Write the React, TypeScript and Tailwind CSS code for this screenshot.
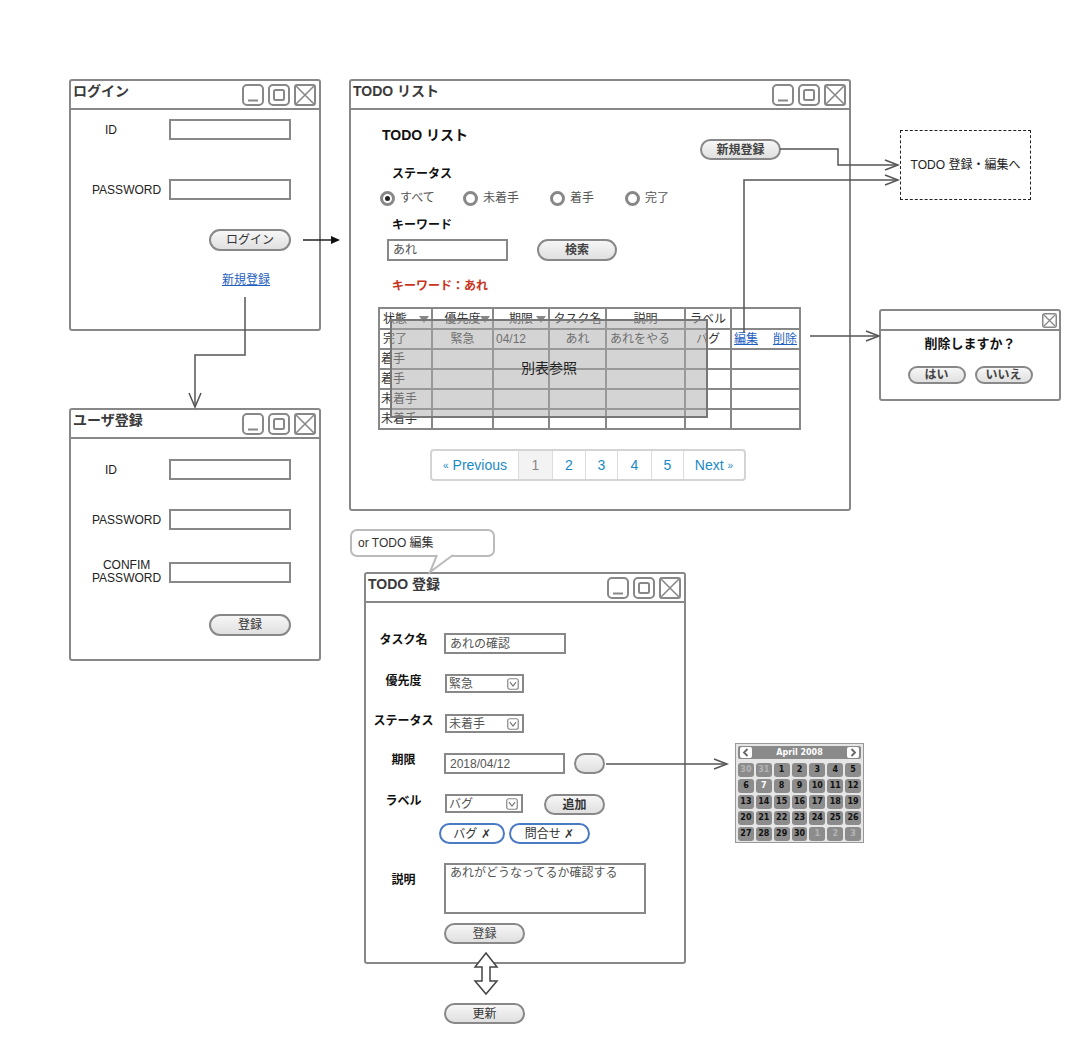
import React from 'react';

const WinControls = () => (
  <div className="flex gap-[4px] pt-[3px]">
    <svg width="22" height="22" viewBox="0 0 22 22">
      <rect x="1" y="1" width="20" height="20" rx="4" fill="white" stroke="#888" strokeWidth="2" />
      <path d="M6 16.5h10" stroke="#888" strokeWidth="2" />
    </svg>
    <svg width="22" height="22" viewBox="0 0 22 22">
      <rect x="1" y="1" width="20" height="20" rx="4" fill="white" stroke="#888" strokeWidth="2" />
      <rect x="6" y="6" width="10" height="10" rx="1.5" fill="none" stroke="#888" strokeWidth="2" />
    </svg>
    <svg width="22" height="22" viewBox="0 0 22 22">
      <rect x="1" y="1" width="20" height="20" rx="2" fill="white" stroke="#888" strokeWidth="2" />
      <path d="M2 2l18 18M20 2L2 20" stroke="#888" strokeWidth="1.6" />
    </svg>
  </div>
);

type WinProps = { title: string; className: string; children?: React.ReactNode };

function Win({ title, className, children }: WinProps) {
  return (
    <div className={`absolute flex flex-col bg-white border-2 border-[#888] rounded-[3px] ${className}`}>
      <div className="h-[29px] shrink-0 flex items-start justify-between border-b-2 border-[#888] pl-[2px] pr-[3px]">
        <span className="text-[14px] leading-[20px] font-bold text-[#3a3a3a]">{title}</span>
        <WinControls />
      </div>
      {children}
    </div>
  );
}

function Btn({ children, className = '' }: { children?: React.ReactNode; className?: string }) {
  return (
    <div
      className={`flex items-center justify-center rounded-full border-2 border-[#888] bg-linear-to-b from-[#f6f6f6] to-[#e0e0e0] text-[12px] leading-[14px] ${className}`}
    >
      {children}
    </div>
  );
}

function Field({ children, className = '' }: { children?: React.ReactNode; className?: string }) {
  return (
    <div className={`flex items-center border-2 border-[#888] bg-white pl-[4px] text-[12px] text-[#555] ${className}`}>
      {children}
    </div>
  );
}

function Select({ children, className = '' }: { children?: React.ReactNode; className?: string }) {
  return (
    <div
      className={`flex items-center justify-between border-2 border-[#888] bg-white h-[19px] pl-[2px] pr-[3px] text-[12px] text-[#555] ${className}`}
    >
      <span>{children}</span>
      <svg width="12" height="12" viewBox="0 0 12 12">
        <rect x="0.75" y="0.75" width="10.5" height="10.5" rx="2" fill="white" stroke="#888" strokeWidth="1.2" />
        <path d="M3 4.2l3 3.8 3-3.8" fill="none" stroke="#777" strokeWidth="1.2" />
      </svg>
    </div>
  );
}

function Radio({ on, label, className = '' }: { on?: boolean; label: string; className?: string }) {
  return (
    <div className={`flex items-center gap-[5px] ${className}`}>
      <span className="flex w-[15px] h-[15px] items-center justify-center rounded-full border-[3px] border-[#888] bg-white">
        {on && <span className="w-[5px] h-[5px] rounded-full bg-[#222]" />}
      </span>
      <span className="text-[12px] text-[#555]">{label}</span>
    </div>
  );
}

const Tri = () => (
  <svg width="10" height="7" viewBox="0 0 10 7" className="absolute right-[2px] top-[7px]">
    <path d="M0 0h10L5 7z" fill="#888" />
  </svg>
);

function Label({ children, className = '' }: { children: React.ReactNode; className?: string }) {
  return <div className={`w-[75px] shrink-0 text-center text-[12px] leading-[14px] font-bold text-[#111] ${className}`}>{children}</div>;
}

const calDays: { d: number; dim?: boolean; hi?: boolean }[] = [
  { d: 30, dim: true },
  { d: 31, dim: true },
  ...Array.from({ length: 30 }, (_, i) => ({ d: i + 1, hi: i + 1 === 7 })),
  { d: 1, dim: true },
  { d: 2, dim: true },
  { d: 3, dim: true },
];

const Calendar = () => (
  <div className="absolute left-[735px] top-[743px] w-[129px] h-[100px] border border-[#999] bg-[#e6e6e6] p-[2px] font-['DejaVu_Sans',sans-serif]">
    <div className="flex items-center justify-between h-[13px] rounded-[2px] bg-[#8a8a8a] px-[2px]">
      <svg width="12" height="11" viewBox="0 0 12 11">
        <rect x="0" y="0" width="12" height="11" rx="2" fill="white" />
        <path d="M7.5 2L4 5.5 7.5 9" fill="none" stroke="#666" strokeWidth="1.8" />
      </svg>
      <span className="text-[8px] leading-[10px] font-bold text-white">April 2008</span>
      <svg width="12" height="11" viewBox="0 0 12 11">
        <rect x="0" y="0" width="12" height="11" rx="2" fill="white" />
        <path d="M4.5 2L8 5.5 4.5 9" fill="none" stroke="#666" strokeWidth="1.8" />
      </svg>
    </div>
    <div className="mt-[4px] grid grid-cols-7 gap-[2px]">
      {calDays.map((c, i) => (
        <div
          key={i}
          className={`flex h-[14px] items-center justify-center rounded-[3px] bg-[#8c8c8c] text-[8px] font-bold ${
            c.dim ? 'text-[#b4b4b4]' : c.hi ? 'text-white' : 'text-[#111]'
          }`}
        >
          {c.d}
        </div>
      ))}
    </div>
  </div>
);

export default function App() {
  return (
    <div className="relative w-[1080px] h-[1044px] overflow-hidden bg-white font-['Liberation_Sans','Noto_Sans_CJK_JP',sans-serif] text-[#222]">
      {/* ログイン */}
      <Win title="ログイン" className="left-[69px] top-[79px] w-[252px] h-[252px]">
        <div className="mt-[9px] flex items-center">
          <span className="w-[98px] pl-[34px] text-[12px]">ID</span>
          <Field className="w-[122px] h-[21px]" />
        </div>
        <div className="mt-[39px] flex items-center">
          <span className="w-[98px] pl-[21px] text-[12px]">PASSWORD</span>
          <Field className="w-[122px] h-[21px]" />
        </div>
        <Btn className="ml-[138px] mt-[29px] w-[82px] h-[22px] text-[#333]">ログイン</Btn>
        <a className="ml-[151px] mt-[21px] w-fit text-[12px] leading-[16px] text-[#1f5fbf] underline">新規登録</a>
      </Win>

      {/* ユーザ登録 */}
      <Win title="ユーザ登録" className="left-[69px] top-[408px] w-[252px] h-[253px]">
        <div className="mt-[20px] flex items-center">
          <span className="w-[98px] pl-[34px] text-[12px]">ID</span>
          <Field className="w-[122px] h-[21px]" />
        </div>
        <div className="mt-[29px] flex items-center">
          <span className="w-[98px] pl-[21px] text-[12px]">PASSWORD</span>
          <Field className="w-[122px] h-[21px]" />
        </div>
        <div className="mt-[29px] flex items-center">
          <span className="w-[98px] pl-[21px] text-[12px] leading-[13px]">
            <span className="inline-block text-center">
              CONFIM
              <br />
              PASSWORD
            </span>
          </span>
          <Field className="w-[122px] h-[21px]" />
        </div>
        <Btn className="ml-[138px] mt-[29px] w-[82px] h-[22px] text-[#333]">登録</Btn>
      </Win>

      {/* TODO リスト */}
      <Win title="TODO リスト" className="left-[349px] top-[79px] w-[502px] h-[432px]">
        <div className="mt-[15px] flex items-start justify-between pl-[31px] pr-[68px]">
          <span className="text-[14px] leading-[20px] font-bold text-[#111]">TODO リスト</span>
          <Btn className="mt-[14px] w-[81px] h-[21px] font-bold text-[#444]">新規登録</Btn>
        </div>
        <div className="ml-[41px] mt-[6px] text-[12px] leading-[16px] font-bold text-[#111]">ステータス</div>
        <div className="ml-[29px] mt-[7px] flex">
          <Radio on label="すべて" className="w-[83px]" />
          <Radio label="未着手" className="w-[87px]" />
          <Radio label="着手" className="w-[75px]" />
          <Radio label="完了" />
        </div>
        <div className="ml-[41px] mt-[10px] text-[12px] leading-[16px] font-bold text-[#111]">キーワード</div>
        <div className="ml-[36px] mt-[6px] flex">
          <Field className="w-[121px] h-[22px]">あれ</Field>
          <Btn className="ml-[29px] w-[80px] h-[22px] font-bold text-[#444]">検索</Btn>
        </div>
        <div className="ml-[41px] mt-[17px] text-[12px] leading-[16px] font-bold text-[#c8341e]">キーワード：あれ</div>

        <div className="relative ml-[27px] mt-[13px] w-[423px]">
          <table className="w-[423px] table-fixed border-collapse text-[12px] leading-[16px] text-[#333]">
            <colgroup>
              <col className="w-[53px]" />
              <col className="w-[61px]" />
              <col className="w-[56px]" />
              <col className="w-[57px]" />
              <col className="w-[79px]" />
              <col className="w-[46px]" />
              <col className="w-[69px]" />
            </colgroup>
            <tbody>
              <tr className="h-[21px]">
                <td className="relative border-2 border-[#888] p-0 pl-[3px]">
                  状態
                  <Tri />
                </td>
                <td className="relative border-2 border-[#888] p-0 text-center">
                  優先度
                  <Tri />
                </td>
                <td className="relative border-2 border-[#888] p-0 text-center">
                  期限
                  <Tri />
                </td>
                <td className="border-2 border-[#888] p-0 text-center">タスク名</td>
                <td className="border-2 border-[#888] p-0 text-center">説明</td>
                <td className="border-2 border-[#888] p-0 text-center">ラベル</td>
                <td className="border-2 border-[#888] p-0" />
              </tr>
              <tr className="h-[20px]">
                <td className="border-2 border-[#888] p-0 pl-[3px]">完了</td>
                <td className="border-2 border-[#888] p-0 text-center">緊急</td>
                <td className="border-2 border-[#888] p-0 pl-[2px]">04/12</td>
                <td className="border-2 border-[#888] p-0 text-center">あれ</td>
                <td className="border-2 border-[#888] p-0 pl-[3px]">あれをやる</td>
                <td className="border-2 border-[#888] p-0 text-center">バグ</td>
                <td className="border-2 border-[#888] p-0">
                  <div className="flex justify-between px-[2px] text-[#1f5fbf] underline">
                    <span>編集</span>
                    <span>削除</span>
                  </div>
                </td>
              </tr>
              {['着手', '着手', '未着手', '未着手'].map((s, i) => (
                <tr key={i} className="h-[20px]">
                  <td className="border-2 border-[#888] p-0 pl-[1px]">{s}</td>
                  <td className="border-2 border-[#888] p-0" />
                  <td className="border-2 border-[#888] p-0" />
                  <td className="border-2 border-[#888] p-0" />
                  <td className="border-2 border-[#888] p-0" />
                  <td className="border-2 border-[#888] p-0" />
                  <td className="border-2 border-[#888] p-0" />
                </tr>
              ))}
            </tbody>
          </table>
          <div className="absolute left-[12px] top-[12px] flex w-[318px] h-[99px] items-center justify-center border-2 border-[#777] bg-[rgba(170,170,170,0.5)] text-[14px] text-[#222]">
            別表参照
          </div>
        </div>

        <div className="ml-[79px] mt-[19px] flex h-[32px] w-fit overflow-hidden rounded-[4px] border-2 border-[#d4d4d4] text-[14px] text-[#1a8ac6]">
          <div className="flex w-[86px] items-center justify-center gap-[4px]">
            <span className="text-[10px]">«</span>Previous
          </div>
          <div className="flex w-[34px] items-center justify-center border-l border-[#ddd] bg-[#f3f3f3] text-[#888]">1</div>
          <div className="flex w-[33px] items-center justify-center border-l border-[#ddd]">2</div>
          <div className="flex w-[32px] items-center justify-center border-l border-[#ddd]">3</div>
          <div className="flex w-[34px] items-center justify-center border-l border-[#ddd]">4</div>
          <div className="flex w-[32px] items-center justify-center border-l border-[#ddd]">5</div>
          <div className="flex w-[61px] items-center justify-center gap-[4px] border-l border-[#ddd]">
            Next<span className="text-[10px]">»</span>
          </div>
        </div>
      </Win>

      {/* 遷移先 */}
      <div className="absolute left-[900px] top-[130px] flex w-[131px] h-[70px] items-center justify-center border border-dashed border-[#222] text-[12px]">
        TODO 登録・編集へ
      </div>

      {/* 削除確認 */}
      <div className="absolute left-[879px] top-[309px] flex w-[182px] h-[92px] flex-col rounded-[3px] border-2 border-[#888] bg-white">
        <div className="flex h-[20px] justify-end border-b-2 border-[#888] pr-[2px] pt-[2px]">
          <svg width="15" height="15" viewBox="0 0 15 15">
            <rect x="0.75" y="0.75" width="13.5" height="13.5" rx="2" fill="white" stroke="#888" strokeWidth="1.5" />
            <path d="M2 2l11 11M13 2L2 13" stroke="#888" strokeWidth="1.3" />
          </svg>
        </div>
        <div className="mt-[4px] text-center text-[13px] leading-[18px] font-bold text-[#111]">削除しますか？</div>
        <div className="mt-[13px] flex justify-center gap-[9px]">
          <Btn className="w-[58px] h-[18px] font-bold text-[#444]">はい</Btn>
          <Btn className="w-[58px] h-[18px] font-bold text-[#444]">いいえ</Btn>
        </div>
      </div>

      {/* 吹き出し */}
      <div className="absolute left-[350px] top-[529px] flex w-[145px] h-[28px] items-center rounded-[7px] border-2 border-[#bbb] bg-white pl-[6px] text-[12px] text-[#333]">
        or TODO 編集
      </div>

      {/* TODO 登録 */}
      <Win title="TODO 登録" className="left-[364px] top-[572px] w-[322px] h-[392px]">
        <div className="mt-[30px] flex items-start">
          <Label>タスク名</Label>
          <Field className="ml-[3px] w-[122px] h-[21px]">あれの確認</Field>
        </div>
        <div className="mt-[20px] flex items-start">
          <Label>優先度</Label>
          <Select className="ml-[4px] w-[79px]">緊急</Select>
        </div>
        <div className="mt-[21px] flex items-start">
          <Label>ステータス</Label>
          <Select className="ml-[4px] w-[79px]">未着手</Select>
        </div>
        <div className="mt-[20px] flex items-start">
          <Label>期限</Label>
          <Field className="ml-[3px] w-[121px] h-[21px]">2018/04/12</Field>
          <Btn className="ml-[9px] w-[31px] h-[21px]" />
        </div>
        <div className="mt-[20px] flex items-start">
          <Label>ラベル</Label>
          <Select className="ml-[4px] w-[78px]">バグ</Select>
          <Btn className="ml-[21px] w-[61px] h-[21px] font-bold text-[#333]">追加</Btn>
        </div>
        <div className="ml-[73px] mt-[8px] flex gap-[4px]">
          <div className="flex w-[66px] h-[21px] items-center justify-center rounded-full border-2 border-[#4a7ac4] bg-white text-[12px] text-[#333]">
            バグ ✗
          </div>
          <div className="flex w-[81px] h-[21px] items-center justify-center rounded-full border-2 border-[#4a7ac4] bg-white text-[12px] text-[#333]">
            問合せ ✗
          </div>
        </div>
        <div className="mt-[19px] flex items-start">
          <Label className="pt-[10px]">説明</Label>
          <div className="ml-[3px] w-[202px] h-[51px] border-2 border-[#888] bg-white pl-[4px] text-[12px] leading-[16px] text-[#555]">
            あれがどうなってるか確認する
          </div>
        </div>
        <Btn className="ml-[78px] mt-[9px] w-[81px] h-[21px] text-[#444]">登録</Btn>
      </Win>

      <Btn className="absolute left-[444px] top-[1003px] w-[81px] h-[21px] text-[#333]">更新</Btn>

      <Calendar />

      {/* 矢印 */}
      <svg className="pointer-events-none absolute left-0 top-0" width="1080" height="1044" viewBox="0 0 1080 1044">
        <g fill="none" stroke="#555" strokeWidth="1.5">
          <path d="M303 240H332" stroke="#222" />
          <path d="M245 297V355H195V406" />
          <path d="M189 393L195 407L201 393" />
          <path d="M780 149H838V165H897" />
          <path d="M885 160L898 165L885 170" />
          <path d="M744 333V180H897" />
          <path d="M885 175L898 180L885 185" />
          <path d="M810 336H878" />
          <path d="M866 331L879 336L866 341" />
          <path d="M606 764H727" />
          <path d="M714 759L727 764L714 769" />
        </g>
        <path d="M331 236L340 240L331 244Z" fill="#111" />
        <path d="M437 555L430 572L453 555" fill="white" stroke="#bbb" strokeWidth="2" />
        <path
          d="M486 953L497 967H490V981H497L486 994L475 981H482V967H475Z"
          fill="white"
          stroke="#444"
          strokeWidth="1.5"
          strokeLinejoin="miter"
        />
      </svg>
    </div>
  );
}
